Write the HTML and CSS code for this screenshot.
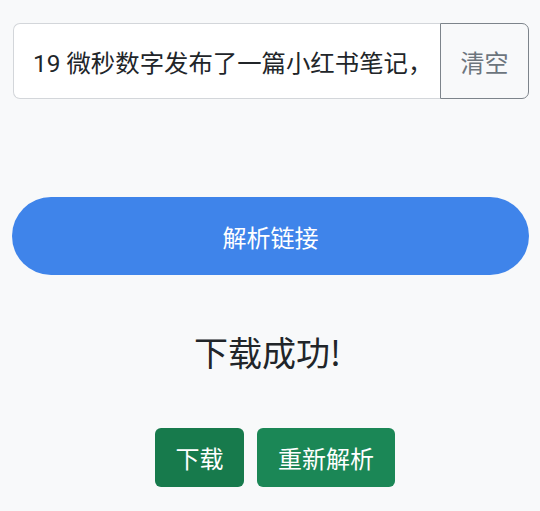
FILE: index.html
```html
<!DOCTYPE html>
<html lang="zh-CN">
<head>
<meta charset="utf-8">
<title>解析链接</title>
<link rel="stylesheet" href="styles.css">
</head>
<body>
<main class="page">
  <div class="input-group">
    <input class="url-input" type="text" value="19 微秒数字发布了一篇小红书笔记，快来看吧！">
    <button class="btn-clear" type="button">清空</button>
  </div>
  <button class="btn-parse" type="button">解析链接</button>
  <h2 class="status">下载成功!</h2>
  <div class="actions">
    <button class="btn-green btn-download" type="button">下载</button>
    <button class="btn-green btn-reparse" type="button">重新解析</button>
  </div>
</main>
</body>
</html>
```

FILE: styles.css
```css
html, body {
  margin: 0;
  padding: 0;
  background: #f8f9fa;
}
body {
  font-family: "Noto Sans CJK SC", "Noto Sans", sans-serif;
  color: #212529;
}
.page {
  padding: 23px 11px 0 12px;
  display: flex;
  flex-direction: column;
}
.input-group {
  display: flex;
  height: 76px;
  margin-left: 1px;
}
.url-input {
  flex: 1;
  min-width: 0;
  box-sizing: border-box;
  height: 76px;
  border: 1px solid #d3d6da;
  border-right: none;
  border-radius: 7px 0 0 7px;
  background: #fff;
  padding: 0 18px 0 19px;
  font-family: "Roboto", "Noto Sans CJK SC", sans-serif;
  font-size: 24.4px;
  color: #212529;
  outline: none;
}
.btn-clear {
  width: 89px;
  box-sizing: border-box;
  height: 76px;
  border: 1.5px solid #7d848b;
  border-radius: 0 7px 7px 0;
  background: #f8f9fa;
  color: #6c757d;
  font-family: "Noto Sans CJK SC", sans-serif;
  font-size: 24px;
  padding: 0;
}
.btn-parse {
  margin-top: 98px;
  height: 78px;
  border: none;
  border-radius: 39px;
  background: #3f84ea;
  color: #fff;
  font-family: "Noto Sans CJK SC", sans-serif;
  font-size: 24px;
  padding: 0;
}
.status {
  margin: 52px 0 0;
  padding-right: 6px;
  text-align: center;
  font-weight: 400;
  font-size: 34px;
  line-height: 50px;
  color: #212529;
}
.actions {
  margin-top: 51px;
  display: flex;
  justify-content: center;
  gap: 13px;
  padding-left: 9px;
}
.btn-green {
  box-sizing: border-box;
  height: 59px;
  border: none;
  border-radius: 6px;
  color: #fff;
  font-family: "Noto Sans CJK SC", sans-serif;
  font-size: 24px;
  padding: 0;
  white-space: nowrap;
}
.btn-download {
  width: 89px;
  background: #177a4c;
}
.btn-reparse {
  width: 138px;
  background: #1b8756;
}
```
